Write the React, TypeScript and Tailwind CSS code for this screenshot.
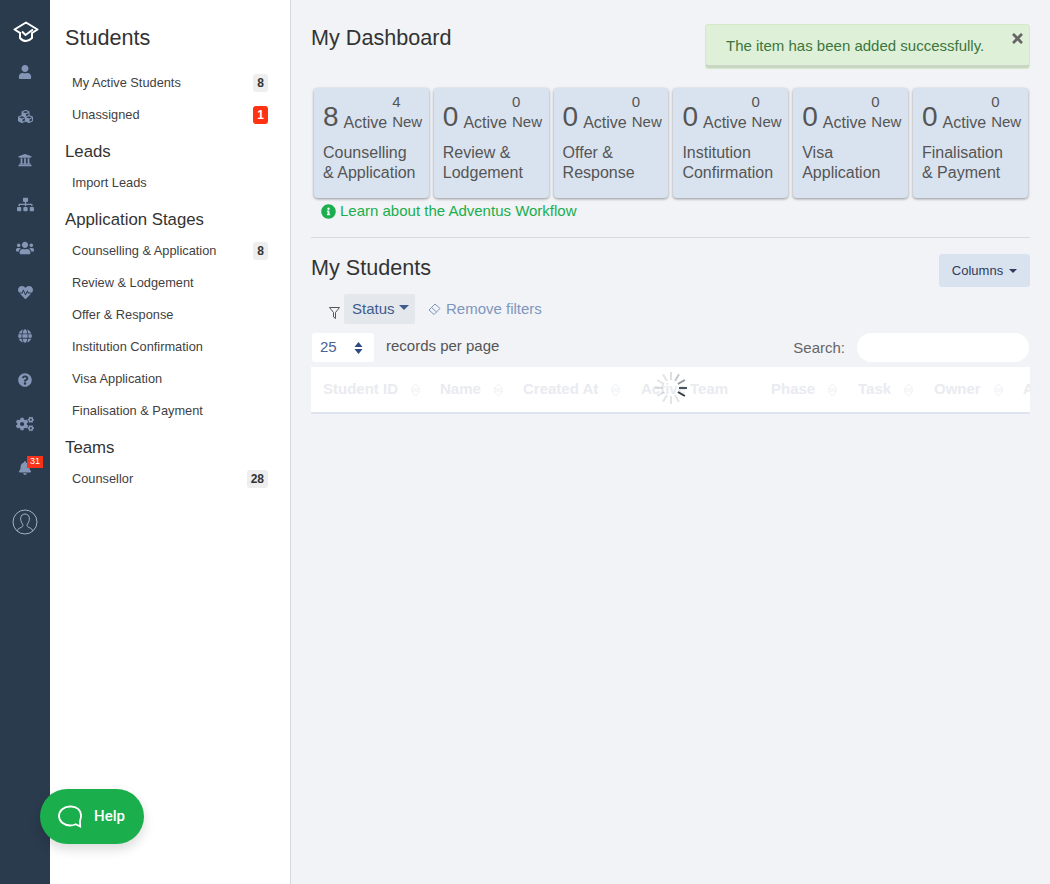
import {
  FaBell,
  FaCogs,
  FaCubes,
  FaGlobe,
  FaHeartbeat,
  FaInfoCircle,
  FaQuestionCircle,
  FaSitemap,
  FaTimes,
  FaUniversity,
  FaUser,
  FaUsers,
} from "react-icons/fa";

const font = "font-['Liberation_Sans',Arial,sans-serif]";

const railIcons = [
  { icon: FaUser, size: 14 },
  { icon: FaCubes, size: 15 },
  { icon: FaUniversity, size: 14 },
  { icon: FaSitemap, size: 17 },
  { icon: FaUsers, size: 18 },
  { icon: FaHeartbeat, size: 15 },
  { icon: FaGlobe, size: 14 },
  { icon: FaQuestionCircle, size: 14 },
  { icon: FaCogs, size: 18 },
];

const cards = [
  { count: 8, fresh: 4, lines: ["Counselling", "& Application"] },
  { count: 0, fresh: 0, lines: ["Review &", "Lodgement"] },
  { count: 0, fresh: 0, lines: ["Offer &", "Response"] },
  { count: 0, fresh: 0, lines: ["Institution", "Confirmation"] },
  { count: 0, fresh: 0, lines: ["Visa", "Application"] },
  { count: 0, fresh: 0, lines: ["Finalisation", "& Payment"] },
];

const columns = [
  { name: "Student ID", width: "w-[117px]", sort: "ml-[12px]" },
  { name: "Name", width: "w-[83px]", sort: "ml-[12px]" },
  { name: "Created At", width: "w-[118px]", sort: "ml-[12px]" },
  { name: "Active", width: "w-[49px]" },
  { name: "Team", width: "w-[81px]" },
  { name: "Phase", width: "w-[87px]", sort: "ml-[12px]" },
  { name: "Task", width: "w-[76px]", sort: "ml-[12px]" },
  { name: "Owner", width: "w-[89px]", sort: "ml-[12px]" },
  { name: "Actions", width: "w-[80px]" },
];

function NavItem({ label, badge, red }: { label: string; badge?: string; red?: boolean }) {
  return (
    <div className="flex h-8 items-center justify-between pl-[7px] pr-[22px] text-[12.8px] text-[#3f3f3f]">
      <span>{label}</span>
      {badge && (
        <span
          className={
            red
              ? "flex h-[18px] min-w-[15px] items-center justify-center rounded-[3px] bg-[#ff3311] px-1 text-[12px] font-bold text-white"
              : "flex h-[18px] min-w-[15px] items-center justify-center rounded-[3px] bg-[#eeeeee] px-1 text-[12px] font-bold text-[#333333]"
          }
        >
          {badge}
        </span>
      )}
    </div>
  );
}

function NavHeading({ children }: { children: string }) {
  return <h3 className="mt-[6px] h-[30px] text-[16.8px] leading-[30px] text-[#333333]">{children}</h3>;
}

function SortIcon({ className }: { className?: string }) {
  return (
    <svg width="11" height="14" viewBox="0 0 11 14" fill="none" stroke="#eef0f3" className={className}>
      <path d="M1 6 5.500 1 10 6ZM1 8 5.500 13 10 8Z" />
    </svg>
  );
}

function Spinner() {
  const ticks = Array.from({ length: 12 }, (_, i) => i);
  const opacity = [0.8, 0.95, 0.12, 0.12, 0.12, 0.12, 0.12, 0.12, 0.12, 0.15, 0.25, 0.5];
  return (
    <svg width="34" height="34" viewBox="-17 -17 34 34" className="absolute left-[343px] top-[4px]">
      {ticks.map((i) => (
        <line
          key={i}
          x1="8"
          y1="0"
          x2="16"
          y2="0"
          stroke="#222d36"
          strokeWidth="2"
          opacity={opacity[i]}
          transform={`rotate(${i * 30})`}
        />
      ))}
    </svg>
  );
}

export default function App() {
  return (
    <div className={`relative flex h-screen overflow-hidden bg-[#f1f3f6] ${font}`}>
      <aside className="flex w-[50px] shrink-0 flex-col items-center bg-[#2a3b4d] text-[#8496b6]">
        <svg width="26" height="24" viewBox="0 0 26 24" fill="none" stroke="#ffffff" strokeWidth="2" className="ml-px mt-5">
          <path d="M1.500 9.500 13 2.500 24.500 9.500 19 13V18Q16 21 13 21 9.500 21 7 18V12.800Z" strokeLinejoin="round" />
          <path d="M9 11.500 12.500 15 20 9.500" />
        </svg>
        <div className="mt-[6px] flex flex-col">
          {railIcons.map(({ icon: Icon, size }, i) => (
            <div key={i} className="flex h-11 w-[50px] items-center justify-center">
              <Icon size={size} />
            </div>
          ))}
          <div className="relative flex h-11 w-[50px] items-center justify-center">
            <FaBell size={14} />
            <span className="absolute left-[27px] top-[10px] flex h-3 w-4 items-center justify-center bg-[#f9321a] text-[9px] text-white">
              31
            </span>
          </div>
        </div>
        <svg width="26" height="26" viewBox="0 0 26 26" fill="none" stroke="#a3b2c9" className="mt-[19px]">
          <circle cx="13" cy="13" r="12" />
          <path d="M5 22c1-3 4-3 5.500-4.500 .5-1 .5-1.500 0-2.500-3-4-2.500-10 2.500-10s5.500 6 2.500 10c-.5 1-.5 1.500 0 2.500C17 19 20 19 21 22" />
        </svg>
      </aside>

      <nav className="w-[241px] shrink-0 border-r border-[#d5d8dc] bg-white pl-[15px]">
        <h2 className="mt-[23px] mb-[14px] text-[21.600px] leading-[30px] text-[#333333]">Students</h2>
        <NavItem label="My Active Students" badge="8" />
        <NavItem label="Unassigned" badge="1" red />
        <NavHeading>Leads</NavHeading>
        <NavItem label="Import Leads" />
        <NavHeading>Application Stages</NavHeading>
        <NavItem label="Counselling & Application" badge="8" />
        <NavItem label="Review & Lodgement" />
        <NavItem label="Offer & Response" />
        <NavItem label="Institution Confirmation" />
        <NavItem label="Visa Application" />
        <NavItem label="Finalisation & Payment" />
        <NavHeading>Teams</NavHeading>
        <NavItem label="Counsellor" badge="28" />
      </nav>

      <main className="min-w-0 flex-1 px-5 pt-6">
        <div className="flex items-start justify-between">
          <h1 className="text-[21.600px] leading-[28px] text-[#333333]">My Dashboard</h1>
          <div className="relative flex h-[45px] w-[325px] items-start rounded-[3px] border border-[#d6e9c6] bg-[#dff0d8] pl-5 pt-[12px] text-[15px] leading-[18px] text-[#3c763d] shadow-[inset_0_-3px_0_#c9d6c3]">
            The item has been added successfully.
            <FaTimes size={15} className="absolute right-[4px] top-[6px] text-[#666666]" />
          </div>
        </div>

        <div className="ml-[3px] mt-[19px] flex gap-[5px]">
          {cards.map((card, i) => (
            <div
              key={i}
              className="h-[110px] w-[114.800px] rounded-[4px] bg-[#d9e3ef] pl-[9px] text-[#555555] shadow-[0_1px_3px_rgba(0,0,0,0.4)]"
            >
              <div className="flex h-[46px] items-end">
                <span className="mb-[-1px] text-[28px] leading-[36px]">{card.count}</span>
                <span className="ml-[5px] text-[16px] leading-[22px]">Active</span>
                <span className="ml-[5px] mb-[2px] flex w-[31px] flex-col text-[15px] leading-[20px]">
                  <span>{card.fresh}</span>
                  <span>New</span>
                </span>
              </div>
              <div className="mt-[9px] text-[16px] leading-[20px]">
                {card.lines.map((line) => (
                  <div key={line}>{line}</div>
                ))}
              </div>
            </div>
          ))}
        </div>

        <div className="ml-[10px] mt-[3px] flex h-[20px] items-center gap-[4px] text-[15px] text-[#1aae4c]">
          <FaInfoCircle size={15} />
          <span>Learn about the Adventus Workflow</span>
        </div>

        <div className="mt-[16px] border-t border-[#d8dadd]" />

        <div className="mt-4 flex items-start justify-between">
          <h2 className="mt-px text-[21.600px] leading-[26px] text-[#333333]">My Students</h2>
          <button className="flex h-[33px] w-[91px] items-center justify-center gap-[6px] rounded-[3px] bg-[#d9e3ef] text-[13px] text-[#2f3a5c]">
            Columns
            <span className="border-x-4 border-t-4 border-x-transparent border-t-[#2f3a5c]" />
          </button>
        </div>

        <div className="ml-[18px] mt-[7px] flex h-[30px] items-center text-[15px]">
          <svg width="11" height="12" viewBox="0 0 11 12" fill="none" stroke="#555555" className="mt-[7px]">
            <path d="M.5.5h10L6.500 5.500V11.500L4.500 10V5.500Z" />
          </svg>
          <div className="ml-[4px] flex h-[30px] w-[71px] items-center gap-[4px] rounded-[2px] bg-[#e4e8ec] pl-2 text-[#3f5a8c]">
            Status
            <span className="mb-[3px] border-x-[5px] border-t-[5px] border-x-transparent border-t-[#3f5a8c]" />
          </div>
          <svg width="13" height="13" viewBox="0 0 13 13" fill="none" stroke="#7f96bd" className="ml-[13px]">
            <path d="M1 7 7 1 12 5.500 6 11.500ZM3.500 4.500 8.500 9" />
          </svg>
          <span className="ml-[5px] text-[#7f96bd]">Remove filters</span>
        </div>

        <div className="mt-[9px] flex items-start justify-between">
          <div className="flex items-start">
            <div className="ml-px flex h-[29px] w-[62px] items-center justify-between rounded-[3px] bg-white pl-2 pr-[11px] text-[15px] text-[#4a6596]">
              25
              <svg width="9" height="12" viewBox="0 0 9 12" fill="#2f4a80">
                <path d="M4.500 0 8.500 5H.5ZM4.500 12 .5 7H8.500Z" />
              </svg>
            </div>
            <span className="ml-3 text-[15px] leading-[26px] text-[#555555]">records per page</span>
          </div>
          <div className="flex items-start">
            <span className="mt-[6px] text-[15px] leading-[18px] text-[#666666]">Search:</span>
            <div className="ml-3 mr-px h-[29px] w-[172px] rounded-full bg-white" />
          </div>
        </div>

        <div className="relative mt-[5px] h-[47px] overflow-hidden border-b-2 border-[#dfe5ee] bg-white">
          <div className="flex h-[45px] w-[800px] items-center text-[15px] font-bold text-[#e9ebf0]">
            {columns.map((col) => (
              <div key={col.name} className={`flex shrink-0 items-center pl-[12px] ${col.width}`}>
                {col.name}
                {col.sort && <SortIcon className={col.sort} />}
              </div>
            ))}
          </div>
          <Spinner />
        </div>
      </main>

      <div className="absolute left-10 top-[789px] flex h-[55px] w-[104px] items-center rounded-full bg-[#1aae4c] pl-[18px] font-['Roboto',sans-serif] text-[15px] font-medium text-white shadow-[0_5px_12px_rgba(0,0,0,0.15)]">
        <svg width="24" height="24" viewBox="0 0 24 24" fill="none" stroke="#ffffff" strokeWidth="1.800">
          <path d="M12 1.500h1C18.500 1.500 23 5 23 10.500c0 2.500-.5 4-1 5.500l.2 5.500-4.500-2.300C16 20 14.500 20.500 12 20.500 6 20.500 1 16.500 1 11S6 1.500 12 1.500Z" />
        </svg>
        <span className="ml-3">Help</span>
      </div>
    </div>
  );
}
